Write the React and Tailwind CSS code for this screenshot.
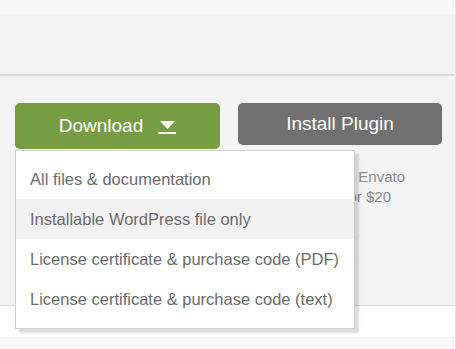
import React from "react";

export default function App() {
  const items = [
    "All files & documentation",
    "Installable WordPress file only",
    "License certificate & purchase code (PDF)",
    "License certificate & purchase code (text)",
  ];
  return (
    <div
      className="w-[456px] h-[349px] bg-[#f3f3f3] flex flex-col overflow-hidden border-r border-[#e2e2e2]"
      style={{ fontFamily: '"Liberation Sans", Arial, sans-serif' }}
    >
      <div className="h-[14px] bg-[#f7f7f7] shrink-0" />
      <div className="h-[60px] shrink-0" />
      <div className="h-[2px] bg-[#dadada] shrink-0" />
      <div className="relative flex-1 flex flex-col">
        <div className="flex items-start pl-[15px] pt-[27px] gap-[18px]">
          <div className="w-[205px] h-[46px] rounded-[5px] bg-[#779d44] flex items-center justify-center gap-[15px] text-white text-[19px]">
            <span>Download</span>
            <svg width="18" height="14" viewBox="0 0 18 14" className="mt-[3px]">
              <path d="M2 0 H17 L9.5 8 Z" fill="#fff" />
              <rect x="0" y="11" width="18" height="2" fill="#fff" />
            </svg>
          </div>
          <div className="w-[204px] h-[42px] rounded-[5px] bg-[#717171] flex items-center justify-center text-white text-[19px]">
            Install Plugin
          </div>
        </div>
        <div className="pl-[238px] pt-[18px] text-[15px] leading-[20px] text-[#8a8a8a] whitespace-nowrap">
          <div className="w-[167px] text-right">Available on Envato</div>
          <div className="w-[153px] text-right">Market for $20</div>
        </div>
        <div className="absolute left-[15px] top-[74px] w-[340px] bg-white border border-[#cfcfcf] shadow-[4px_4px_2px_rgba(0,0,0,0.14)] pt-[8px] pb-[9px] text-[16.5px] text-[#6a6a6a]">
          {items.map((t, i) => (
            <div
              key={t}
              className={`h-[40px] flex items-center pl-[14px] ${i === 1 ? "bg-[#f2f2f2]" : ""}`}
            >
              {t}
            </div>
          ))}
        </div>
      </div>
      <div className="h-[32px] bg-white border-t border-[#d8d8d8] shrink-0" />
      <div className="h-[12px] bg-[#f7f7f7] shrink-0" />
    </div>
  );
}
